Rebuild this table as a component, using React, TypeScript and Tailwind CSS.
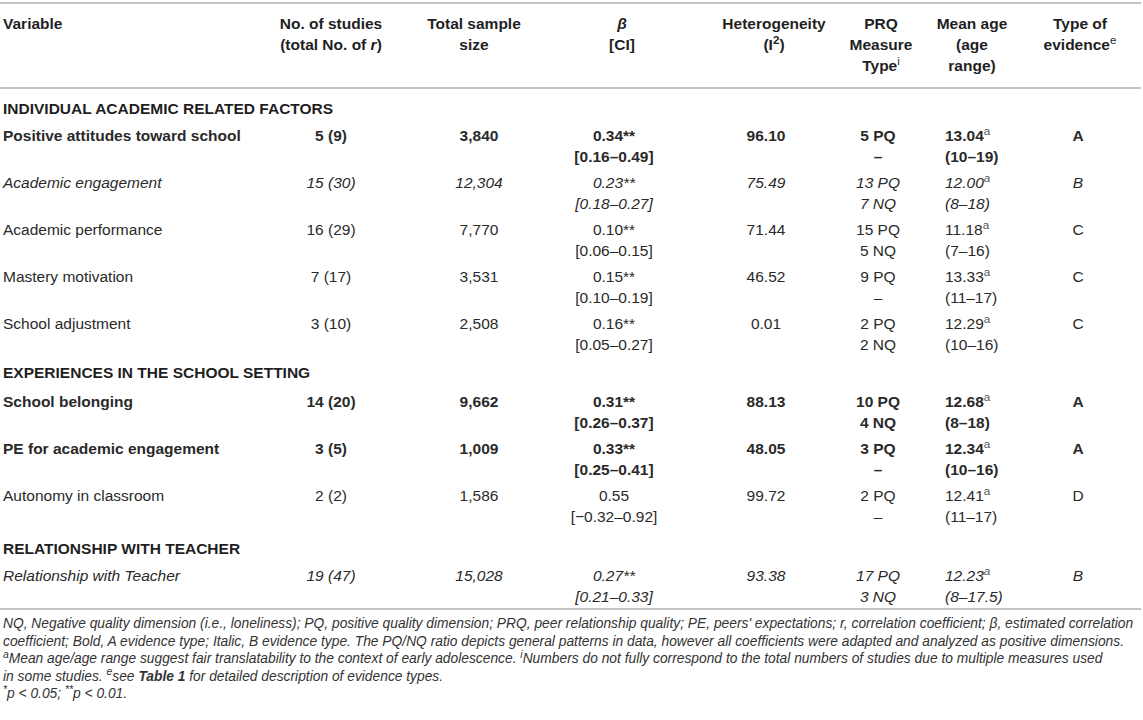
import React from "react";

// ─── Types ───────────────────────────────────────────────────────────

type Tone = "bold" | "italic" | "plain";

interface Row {
  name: string;
  studies: string;
  sample: string;
  beta: string;
  ci: string;
  het: string;
  prq: [string, string];
  age: string;
  range: string;
  evidence: string;
  tone: Tone;
}

interface Section {
  title: string;
  pad: string;
  rows: Row[];
}

// ─── Column boxes (header and body cells sit on slightly different centres) ──

const HEAD_COLS = [
  "w-[247px] pl-[3px] items-start text-left",
  "w-[168px] items-center text-center",
  "w-[118px] items-center text-center",
  "w-[178px] items-center text-center",
  "w-[126px] items-center text-center",
  "w-[88px] items-center text-center",
  "w-[94px] items-center text-center",
  "w-[122px] items-center text-center",
];

const BODY_COLS = [
  "w-[247px] pl-[3px] items-start text-left",
  "w-[168px] items-center text-center",
  "w-[128px] items-center text-center",
  "w-[142px] items-center text-center",
  "w-[162px] items-center text-center",
  "w-[62px] items-center text-center",
  "w-[120px] pl-[36px] items-start text-left",
  "w-[98px] items-center text-center",
];

const TONE: Record<Tone, string> = {
  bold: "font-bold",
  italic: "italic",
  plain: "",
};

// ─── Data ────────────────────────────────────────────────────────────

const SECTIONS: Section[] = [
  {
    title: "INDIVIDUAL ACADEMIC RELATED FACTORS",
    pad: "pt-[9px] pb-[6px]",
    rows: [
      { name: "Positive attitudes toward school", studies: "5 (9)", sample: "3,840", beta: "0.34**", ci: "[0.16–0.49]", het: "96.10", prq: ["5 PQ", "–"], age: "13.04", range: "(10–19)", evidence: "A", tone: "bold" },
      { name: "Academic engagement", studies: "15 (30)", sample: "12,304", beta: "0.23**", ci: "[0.18–0.27]", het: "75.49", prq: ["13 PQ", "7 NQ"], age: "12.00", range: "(8–18)", evidence: "B", tone: "italic" },
      { name: "Academic performance", studies: "16 (29)", sample: "7,770", beta: "0.10**", ci: "[0.06–0.15]", het: "71.44", prq: ["15 PQ", "5 NQ"], age: "11.18", range: "(7–16)", evidence: "C", tone: "plain" },
      { name: "Mastery motivation", studies: "7 (17)", sample: "3,531", beta: "0.15**", ci: "[0.10–0.19]", het: "46.52", prq: ["9 PQ", "–"], age: "13.33", range: "(11–17)", evidence: "C", tone: "plain" },
      { name: "School adjustment", studies: "3 (10)", sample: "2,508", beta: "0.16**", ci: "[0.05–0.27]", het: "0.01", prq: ["2 PQ", "2 NQ"], age: "12.29", range: "(10–16)", evidence: "C", tone: "plain" },
    ],
  },
  {
    title: "EXPERIENCES IN THE SCHOOL SETTING",
    pad: "pt-[2px] pb-[8px]",
    rows: [
      { name: "School belonging", studies: "14 (20)", sample: "9,662", beta: "0.31**", ci: "[0.26–0.37]", het: "88.13", prq: ["10 PQ", "4 NQ"], age: "12.68", range: "(8–18)", evidence: "A", tone: "bold" },
      { name: "PE for academic engagement", studies: "3 (5)", sample: "1,009", beta: "0.33**", ci: "[0.25–0.41]", het: "48.05", prq: ["3 PQ", "–"], age: "12.34", range: "(10–16)", evidence: "A", tone: "bold" },
      { name: "Autonomy in classroom", studies: "2 (2)", sample: "1,586", beta: "0.55", ci: "[−0.32–0.92]", het: "99.72", prq: ["2 PQ", "–"], age: "12.41", range: "(11–17)", evidence: "D", tone: "plain" },
    ],
  },
  {
    title: "RELATIONSHIP WITH TEACHER",
    pad: "pt-[6px] pb-[6px]",
    rows: [
      { name: "Relationship with Teacher", studies: "19 (47)", sample: "15,028", beta: "0.27**", ci: "[0.21–0.33]", het: "93.38", prq: ["17 PQ", "3 NQ"], age: "12.23", range: "(8–17.5)", evidence: "B", tone: "italic" },
    ],
  },
];

// ─── Pieces ──────────────────────────────────────────────────────────

function Rule() {
  return <div className="h-[2px] w-[1141px] bg-[#c4c4c4]" />;
}

function Cell({ cls, children }: { cls: string; children: React.ReactNode }) {
  return <div className={`flex flex-col shrink-0 whitespace-nowrap ${cls}`}>{children}</div>;
}

function HeaderRow() {
  return (
    <div className="flex pt-[9px] pb-[11px] font-bold text-[#1f1f1f]">
      <Cell cls={HEAD_COLS[0]}>
        <span>Variable</span>
      </Cell>
      <Cell cls={HEAD_COLS[1]}>
        <span>No. of studies</span>
        <span>
          (total No. of <i>r</i>)
        </span>
      </Cell>
      <Cell cls={HEAD_COLS[2]}>
        <span>Total sample</span>
        <span>size</span>
      </Cell>
      <Cell cls={HEAD_COLS[3]}>
        <i>β</i>
        <span>[CI]</span>
      </Cell>
      <Cell cls={HEAD_COLS[4]}>
        <span>Heterogeneity</span>
        <span>
          (I<sup>2</sup>)
        </span>
      </Cell>
      <Cell cls={HEAD_COLS[5]}>
        <span>PRQ</span>
        <span>Measure</span>
        <span>
          Type<sup className="font-normal">i</sup>
        </span>
      </Cell>
      <Cell cls={HEAD_COLS[6]}>
        <span>Mean age</span>
        <span>(age</span>
        <span>range)</span>
      </Cell>
      <Cell cls={HEAD_COLS[7]}>
        <span>Type of</span>
        <span>
          evidence<sup className="font-normal">e</sup>
        </span>
      </Cell>
    </div>
  );
}

function DataRow({ row, last }: { row: Row; last?: boolean }) {
  return (
    <div className={`flex ${last ? "h-[43px]" : "h-[47px]"} ${TONE[row.tone]}`}>
      <Cell cls={BODY_COLS[0]}>
        <span>{row.name}</span>
      </Cell>
      <Cell cls={BODY_COLS[1]}>
        <span>{row.studies}</span>
      </Cell>
      <Cell cls={BODY_COLS[2]}>
        <span>{row.sample}</span>
      </Cell>
      <Cell cls={BODY_COLS[3]}>
        <span>{row.beta}</span>
        <span>{row.ci}</span>
      </Cell>
      <Cell cls={BODY_COLS[4]}>
        <span>{row.het}</span>
      </Cell>
      <Cell cls={BODY_COLS[5]}>
        <span>{row.prq[0]}</span>
        <span>{row.prq[1]}</span>
      </Cell>
      <Cell cls={BODY_COLS[6]}>
        <span>
          {row.age}
          <sup className="font-normal text-[#555]">a</sup>
        </span>
        <span>{row.range}</span>
      </Cell>
      <Cell cls={BODY_COLS[7]}>
        <span>{row.evidence}</span>
      </Cell>
    </div>
  );
}

// ─── Page ────────────────────────────────────────────────────────────

export default function App() {
  return (
    <div className="w-[1143px] h-[720px] overflow-hidden bg-white text-[#2a2a2a] font-['Liberation_Sans',Arial,sans-serif] text-[15.5px] leading-[21px]">
      <div className="h-[2px]" />
      <Rule />
      <HeaderRow />
      <Rule />

      {SECTIONS.map((section, si) => (
        <div key={section.title}>
          <div className={`pl-[3px] font-bold text-[#1f1f1f] ${section.pad}`}>{section.title}</div>
          {section.rows.map((row, ri) => (
            <DataRow
              key={row.name}
              row={row}
              last={si === SECTIONS.length - 1 && ri === section.rows.length - 1}
            />
          ))}
        </div>
      ))}

      <Rule />

      {/* Table notes */}
      <div className="pt-[5px] pl-[3px] italic text-[13.8px] leading-[17.5px] text-[#333] whitespace-nowrap">
        <p>
          NQ, Negative quality dimension (i.e., loneliness); PQ, positive quality dimension; PRQ,
          peer relationship quality; PE, peers' expectations; r, correlation coefficient; β,
          estimated correlation
        </p>
        <p>
          coefficient; Bold, A evidence type; Italic, B evidence type. The PQ/NQ ratio depicts
          general patterns in data, however all coefficients were adapted and analyzed as positive
          dimensions.
        </p>
        <p>
          <sup>a</sup>Mean age/age range suggest fair translatability to the context of early
          adolescence. <sup>i</sup>Numbers do not fully correspond to the total numbers of studies
          due to multiple measures used
        </p>
        <p>
          in some studies. <sup>e</sup>see <b>Table 1</b> for detailed description of evidence
          types.
        </p>
        <p>
          <sup>*</sup>p &lt; 0.05; <sup>**</sup>p &lt; 0.01.
        </p>
      </div>
    </div>
  );
}
